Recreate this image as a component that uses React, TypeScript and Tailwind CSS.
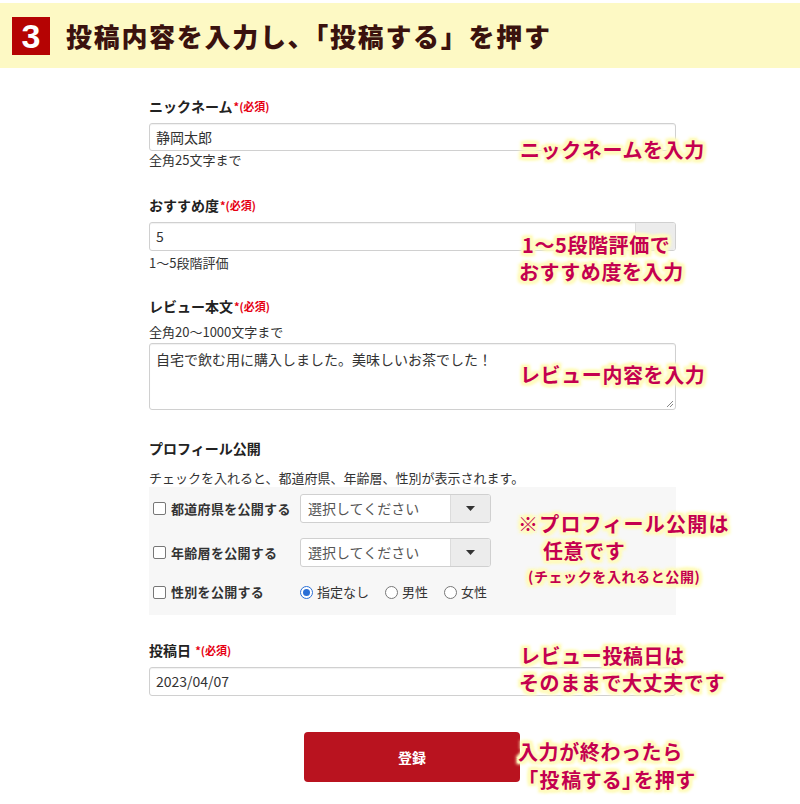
import React from "react";

const ann =
  "absolute font-bold text-[#c4004f] whitespace-nowrap leading-none tracking-[0.6px] [font-family:'Noto_Sans_CJK_JP',sans-serif] [text-shadow:0_0_3px_#fffbc0,2px_0_1px_#fffbc0,-2px_0_1px_#fffbc0,0_2px_1px_#fffbc0,0_-2px_1px_#fffbc0,2px_2px_1px_#fffbc0,-2px_-2px_1px_#fffbc0,2px_-2px_1px_#fffbc0,-2px_2px_1px_#fffbc0,3px_0_3px_#fffbc0,-3px_0_3px_#fffbc0,0_3px_3px_#fffbc0,0_-3px_3px_#fffbc0,3px_3px_3px_#fffbc0,-3px_-3px_3px_#fffbc0,3px_-3px_3px_#fffbc0,-3px_3px_3px_#fffbc0]";

function Req() {
  return (
    <span className="text-[#e60012] text-[11px] font-bold align-top ml-[1px]">*(必須)</span>
  );
}

function Select() {
  return (
    <div className="w-[191px] h-[29px] flex border border-[#d0d0d0] rounded-[3px] bg-white overflow-hidden">
      <div className="flex-1 flex items-center pl-[7px] text-[14px] text-[#555]">選択してください</div>
      <div className="w-[40px] bg-[#ececec] border-l border-[#dcdcdc] flex items-center justify-center">
        <svg width="9" height="6" viewBox="0 0 9 6">
          <path d="M0 0 L9 0 L4.5 5 Z" fill="#333" />
        </svg>
      </div>
    </div>
  );
}

function Check() {
  return (
    <span className="inline-block w-[13px] h-[13px] border border-[#777] rounded-[2px] bg-white mr-[5px]" />
  );
}

function Radio({ on }: { on?: boolean }) {
  return on ? (
    <span className="inline-flex w-[13px] h-[13px] rounded-full border border-[#2a6fd6] bg-white items-center justify-center mr-[4px]">
      <span className="w-[7px] h-[7px] rounded-full bg-[#2a6fd6]" />
    </span>
  ) : (
    <span className="inline-block w-[13px] h-[13px] rounded-full border border-[#777] bg-white mr-[4px]" />
  );
}

export default function App() {
  return (
    <div className="relative w-[800px] h-[804px] bg-white overflow-hidden [font-family:'Noto_Sans_CJK_JP',sans-serif] text-[#333]">
      {/* header */}
      <div className="mt-[3px] h-[65px] bg-[#fdf9c4] flex items-center pl-[12px]">
        <div className="w-[38px] h-[38px] bg-[#b50303] flex items-center justify-center text-white font-bold text-[34px] leading-none [font-family:'Liberation_Sans',sans-serif]">
          3
        </div>
        <div className="ml-[16px] text-[26px] font-black text-[#3a120e] tracking-[1.7px] leading-none">
          投稿内容を入力し、「投稿する」を押す
        </div>
      </div>

      {/* form */}
      <div className="ml-[149px] w-[527px]">
        <div className="mt-[28px] h-[20px] leading-[20px] text-[14px] font-bold text-[#222]">
          ニックネーム<Req />
        </div>
        <div className="mt-[7px] h-[28px] border border-[#d0d0d0] rounded-[3px] flex items-center pl-[6px] text-[14px] shadow-[inset_0_1px_1px_rgba(0,0,0,0.06)]">
          静岡太郎
        </div>
        <div className="h-[18px] leading-[18px] text-[13px]">全角25文字まで</div>

        <div className="mt-[26px] h-[20px] leading-[20px] text-[14px] font-bold text-[#222]">
          おすすめ度<Req />
        </div>
        <div className="mt-[7px] h-[29px] border border-[#d0d0d0] rounded-[3px] flex items-center text-[14px] shadow-[inset_0_1px_1px_rgba(0,0,0,0.06)] overflow-hidden">
          <span className="flex-1 pl-[6px]">5</span>
          <span className="w-[40px] h-full bg-[#ececec] border-l border-[#dcdcdc]" />
        </div>
        <div className="mt-[3px] h-[18px] leading-[18px] text-[13px]">1〜5段階評価</div>

        <div className="mt-[24px] h-[20px] leading-[20px] text-[14px] font-bold text-[#222]">
          レビュー本文<Req />
        </div>
        <div className="mt-[7px] h-[18px] leading-[18px] text-[13px]">全角20〜1000文字まで</div>
        <div className="relative mt-[2px] h-[67px] border border-[#d0d0d0] rounded-[3px] pt-[5px] pl-[6px] text-[14px] leading-[20px] shadow-[inset_0_1px_1px_rgba(0,0,0,0.06)]">
          自宅で飲む用に購入しました。美味しいお茶でした！
          <svg className="absolute right-[1px] bottom-[1px]" width="8" height="8" viewBox="0 0 8 8">
            <path d="M7 1 L1 7 M7 4 L4 7" stroke="#888" strokeWidth="1" />
          </svg>
        </div>

        <div className="mt-[28px] h-[20px] leading-[20px] text-[14px] font-bold text-[#222]">
          プロフィール公開
        </div>
        <div className="mt-[11px] h-[18px] leading-[18px] text-[13px]">
          チェックを入れると、都道府県、年齢層、性別が表示されます。
        </div>
        <div className="h-[128px] bg-[#f7f7f7] pl-[4px] pt-[7px]">
          <div className="flex items-center h-[29px]">
            <div className="w-[147px] flex items-center text-[13px] font-bold text-[#333] tracking-[0.3px]">
              <Check />
              都道府県を公開する
            </div>
            <Select />
          </div>
          <div className="mt-[15px] flex items-center h-[29px]">
            <div className="w-[147px] flex items-center text-[13px] font-bold text-[#333] tracking-[0.3px]">
              <Check />
              年齢層を公開する
            </div>
            <Select />
          </div>
          <div className="mt-[14px] flex items-center h-[22px]">
            <div className="w-[147px] flex items-center text-[13px] font-bold text-[#333] tracking-[0.3px]">
              <Check />
              性別を公開する
            </div>
            <div className="flex items-center text-[13px]">
              <Radio on />
              <span className="mr-[16px]">指定なし</span>
              <Radio />
              <span className="mr-[16px]">男性</span>
              <Radio />
              <span>女性</span>
            </div>
          </div>
        </div>

        <div className="mt-[25px] h-[20px] leading-[20px] text-[14px] font-bold text-[#222]">
          投稿日 <Req />
        </div>
        <div className="mt-[7px] h-[29px] border border-[#d0d0d0] rounded-[3px] flex items-center pl-[6px] text-[14px] shadow-[inset_0_1px_1px_rgba(0,0,0,0.06)]">
          2023/04/07
        </div>

        <div className="mt-[36px] ml-[155px] w-[216px] h-[50px] bg-[#b9131f] rounded-[4px] flex items-center justify-center text-white text-[14px] font-bold">
          登録
        </div>
      </div>

      {/* annotations */}
      <div className={ann + " left-[520px] top-[140px] text-[20px]"}>ニックネームを入力</div>
      <div className={ann + " left-[522px] top-[235px] text-[20px]"}>1〜5段階評価で</div>
      <div className={ann + " left-[519px] top-[262px] text-[20px]"}>おすすめ度を入力</div>
      <div className={ann + " left-[520px] top-[365px] text-[20px]"}>レビュー内容を入力</div>
      <div className={ann + " left-[518px] top-[514px] text-[20px] !tracking-[1.2px]"}>※プロフィール公開は</div>
      <div className={ann + " left-[543px] top-[541px] text-[20px]"}>任意です</div>
      <div className={ann + " left-[528px] top-[569px] text-[14px]"}>(チェックを入れると公開)</div>
      <div className={ann + " left-[520px] top-[646px] text-[20px]"}>レビュー投稿日は</div>
      <div className={ann + " left-[519px] top-[673px] text-[20px]"}>そのままで大丈夫です</div>
      <div className={ann + " left-[518px] top-[742px] text-[20px]"}>入力が終わったら</div>
      <div className={ann + " left-[528px] top-[770px] text-[20px] !tracking-[1.6px] [font-feature-settings:'palt']"}>「投稿する」を押す</div>
    </div>
  );
}
